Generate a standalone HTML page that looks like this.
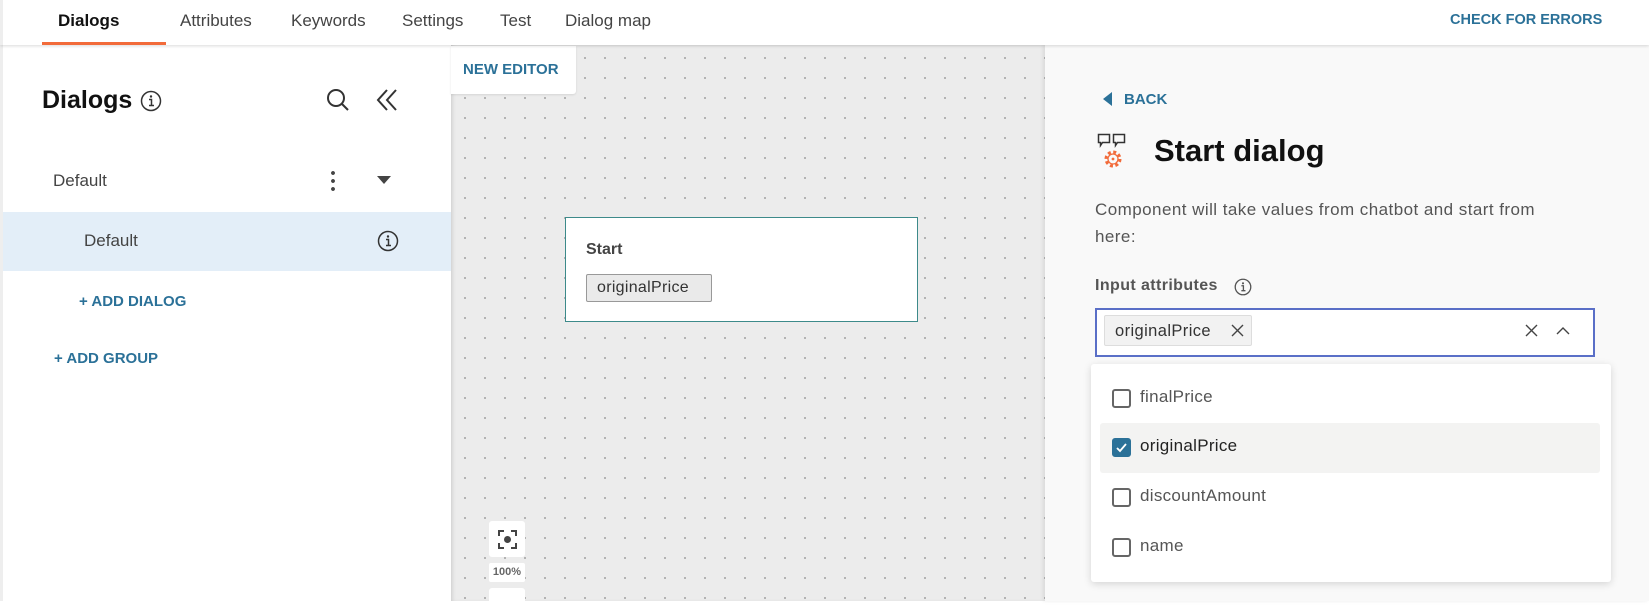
<!DOCTYPE html>
<html><head><meta charset="utf-8"><style>
*{box-sizing:border-box;margin:0;padding:0}
body{width:1649px;height:601px;overflow:hidden;font-family:"Liberation Sans",sans-serif;background:#fff;position:relative;color:#222}
.abs{position:absolute}
#nav{left:0;top:0;width:1649px;height:45px;background:#fff;box-shadow:0 1px 3px rgba(0,0,0,.15);z-index:5;border-left:3px solid #eee}
.tab{position:absolute;top:11px;font-size:17px;color:#444}
#left{left:0;top:45px;width:451px;height:556px;background:#fff;border-left:3px solid #eee}
#canvas{left:451px;top:45px;width:594px;height:556px;background-color:#ececec;background-image:radial-gradient(circle,#a8a8a8 0.8px,transparent 1.2px);background-size:20px 20px;background-position:4px 3px;box-shadow:inset 3px 0 4px -2px rgba(0,0,0,.15)}
#right{left:1045px;top:45px;width:604px;height:556px;background:#f9f9f9;box-shadow:-2px 0 4px rgba(0,0,0,.08)}
.blue{color:#2b7198;font-weight:bold}
.cb{position:absolute;left:1112px;width:19px;height:19px;border:2px solid #666;border-radius:3px;background:#fff}
.it{position:absolute;left:1140px;font-size:17px;color:#555;letter-spacing:.3px}
</style></head><body>
<div id="nav" class="abs">
 <div class="tab" style="left:55px;color:#111;font-weight:bold">Dialogs</div>
 <div class="abs" style="left:39px;top:42px;width:124px;height:3px;background:#f26b3a"></div>
 <div class="tab" style="left:177px">Attributes</div>
 <div class="tab" style="left:288px">Keywords</div>
 <div class="tab" style="left:399px">Settings</div>
 <div class="tab" style="left:497px">Test</div>
 <div class="tab" style="left:562px">Dialog map</div>
 <div class="abs blue" style="left:1447px;top:12px;font-size:14.5px">CHECK FOR ERRORS</div>
</div>
<div id="left" class="abs">
 <div class="abs" style="left:39px;top:41px;font-size:25px;font-weight:bold;color:#111">Dialogs</div>
 <svg class="abs" style="left:137px;top:45px" width="22" height="22" viewBox="0 0 22 22"><circle cx="11" cy="11" r="9.5" fill="none" stroke="#333" stroke-width="1.5"/><circle cx="11" cy="6.5" r="1.2" fill="#333"/><path d="M9 9.5h2.5v6M9 15.5h5" stroke="#333" stroke-width="1.5" fill="none"/></svg>
 <svg class="abs" style="left:322px;top:42px" width="26" height="26" viewBox="0 0 26 26"><circle cx="11" cy="11" r="8" fill="none" stroke="#333" stroke-width="2"/><path d="M17 17l6 6" stroke="#333" stroke-width="2"/></svg>
 <svg class="abs" style="left:372px;top:43px" width="26" height="24" viewBox="0 0 26 24"><path d="M12 2L3 12l9 10M21 2l-9 10 9 10" stroke="#333" stroke-width="2" fill="none"/></svg>
 <div class="abs" style="left:50px;top:126px;font-size:17px;color:#444">Default</div>
 <div class="abs" style="left:328px;top:124px;width:4px;height:24px;background:radial-gradient(circle,#444 1.8px,transparent 2px) 0 0/4px 8px"></div>
 <svg class="abs" style="left:374px;top:131px" width="14" height="8"><path d="M0 0h14L7 8z" fill="#444"/></svg>
 <div class="abs" style="left:0;top:167px;width:448px;height:59px;background:#e3eef8"></div>
 <div class="abs" style="left:81px;top:186px;font-size:17px;color:#444">Default</div>
 <svg class="abs" style="left:374px;top:185px" width="22" height="22" viewBox="0 0 22 22"><circle cx="11" cy="11" r="9.5" fill="none" stroke="#333" stroke-width="1.5"/><circle cx="11" cy="6.5" r="1.2" fill="#333"/><path d="M9 9.5h2.5v6M9 15.5h5" stroke="#333" stroke-width="1.5" fill="none"/></svg>
 <div class="abs blue" style="left:76px;top:248px;font-size:15px">+ ADD DIALOG</div>
 <div class="abs blue" style="left:51px;top:305px;font-size:15px">+ ADD GROUP</div>
</div>
<div id="canvas" class="abs">
 <div class="abs" style="left:0;top:1px;width:125px;height:48px;background:#fff;border-radius:0 0 3px 0;box-shadow:0 1px 2px rgba(0,0,0,.1)"></div>
 <div class="abs blue" style="left:12px;top:16px;font-size:15px">NEW EDITOR</div>
 <div class="abs" style="left:114px;top:172px;width:353px;height:105px;background:#fff;border:1px solid #3d8a8a"></div>
 <div class="abs" style="left:135px;top:196px;font-size:16px;font-weight:bold;color:#444">Start</div>
 <div class="abs" style="left:135px;top:229px;width:126px;height:28px;background:#eaeaea;border:1px solid #999;border-radius:2px;font-size:16px;color:#333;padding:4px 0 0 10px;letter-spacing:.3px">originalPrice</div>
 <div class="abs" style="left:38px;top:476px;width:36px;height:36px;background:#fff;border-radius:3px"></div>
 <svg class="abs" style="left:47px;top:485px" width="19" height="19"><path d="M1 6V1h5M13 1h5v5M18 13v5h-5M6 18H1v-5" stroke="#444" stroke-width="2" fill="none"/><circle cx="9.5" cy="9.5" r="3.5" fill="#444"/></svg>
 <div class="abs" style="left:38px;top:518px;width:36px;height:19px;background:#fff;border-radius:2px;font-size:11px;font-weight:bold;color:#666;text-align:center;padding-top:3px">100%</div>
 <div class="abs" style="left:38px;top:543px;width:36px;height:20px;background:#fff;border-radius:3px"></div>
</div>
<div id="right" class="abs">
 <svg class="abs" style="left:58px;top:47px" width="10" height="14"><path d="M9 0v14L0 7z" fill="#2b7198"/></svg>
 <div class="abs blue" style="left:79px;top:46px;font-size:15px">BACK</div>
 <svg class="abs" style="left:52px;top:88px" width="36" height="38" viewBox="0 0 36 38"><path d="M1.5 1.5h11v8h-7l-2 3v-3h-2z" fill="none" stroke="#333" stroke-width="1.5"/><path d="M16.5 1.5h11v8h-7l-2 3v-3h-2z" fill="none" stroke="#333" stroke-width="1.5"/><circle cx="16" cy="26" r="7" fill="none" stroke="#f26b3a" stroke-width="3" stroke-dasharray="3 2.5"/><circle cx="16" cy="26" r="5" fill="#f9f9f9" stroke="#f26b3a" stroke-width="1.3"/><circle cx="16" cy="26" r="1.4" fill="#f26b3a"/></svg>
 <div class="abs" style="left:109px;top:88px;font-size:31px;font-weight:bold;color:#111">Start dialog</div>
 <div class="abs" style="left:50px;top:151px;width:470px;font-size:17px;line-height:27px;color:#555;letter-spacing:.45px">Component will take values from chatbot and start from here:</div>
 <div class="abs" style="left:50px;top:232px;font-size:16px;font-weight:bold;color:#555;letter-spacing:.4px">Input attributes</div>
 <svg class="abs" style="left:189px;top:233px" width="18" height="18" viewBox="0 0 22 22"><circle cx="11" cy="11" r="9.5" fill="none" stroke="#555" stroke-width="1.6"/><circle cx="11" cy="6.5" r="1.3" fill="#555"/><path d="M9 9.5h2.5v6M9 15.5h5" stroke="#555" stroke-width="1.6" fill="none"/></svg>
 <div class="abs" style="left:50px;top:263px;width:500px;height:49px;background:#fff;border:2px solid #5a6fc7"></div>
 <div class="abs" style="left:59px;top:270px;width:148px;height:31px;background:#f2f2f2;border:1px solid #ddd;border-radius:2px;font-size:16.5px;color:#333;padding:6px 0 0 10px;letter-spacing:.4px">originalPrice</div>
 <svg class="abs" style="left:186px;top:279px" width="13" height="13"><path d="M1 1l11 11M12 1L1 12" stroke="#444" stroke-width="1.4"/></svg>
 <svg class="abs" style="left:480px;top:279px" width="13" height="13"><path d="M1 1l11 11M12 1L1 12" stroke="#444" stroke-width="1.4"/></svg>
 <svg class="abs" style="left:511px;top:281px" width="14" height="9"><path d="M1 8l6-6 6 6" stroke="#444" stroke-width="1.4" fill="none"/></svg>
 <div class="abs" style="left:46px;top:319px;width:520px;height:218px;background:#fff;border-radius:3px;box-shadow:0 2px 8px rgba(0,0,0,.15)"></div>
 <div class="abs" style="left:55px;top:378px;width:500px;height:50px;background:#f3f3f2;border-radius:3px"></div>
</div>
<div class="cb" style="top:389px"></div><div class="it" style="top:387px">finalPrice</div>
<div class="cb" style="top:438px;background:#2b7198;border-color:#2b7198"><svg width="15" height="15" style="position:absolute;left:0;top:0"><path d="M3 8l3 3 6-7" stroke="#fff" stroke-width="1.8" fill="none"/></svg></div><div class="it" style="top:436px;color:#222">originalPrice</div>
<div class="cb" style="top:488px"></div><div class="it" style="top:486px">discountAmount</div>
<div class="cb" style="top:538px"></div><div class="it" style="top:536px">name</div>
</body></html>
